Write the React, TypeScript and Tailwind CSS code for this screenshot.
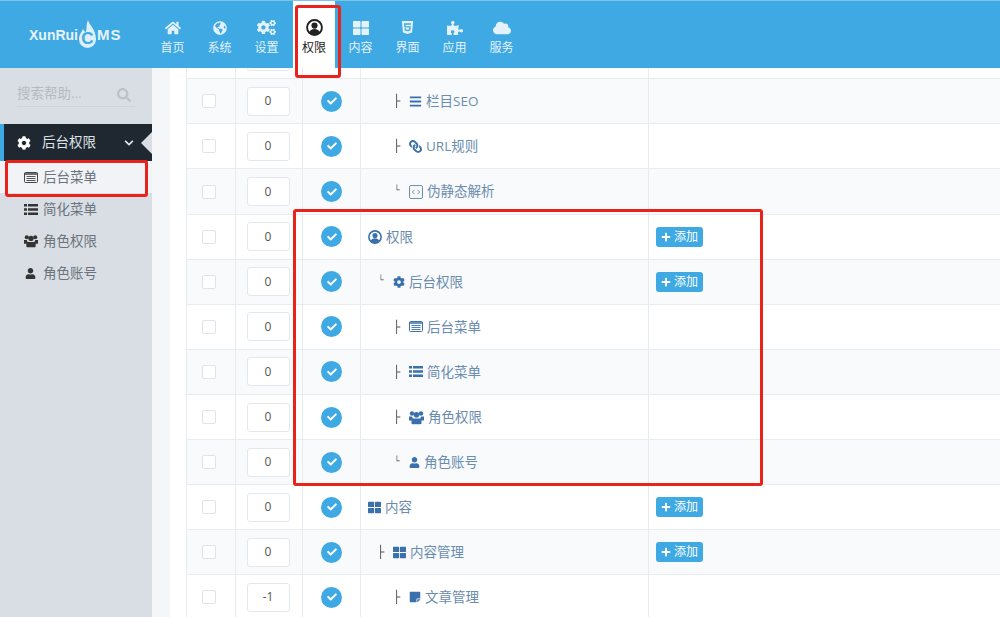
import React from "react";
import {
  FaBars,
  FaChevronDown,
  FaCheck,
  FaCloud,
  FaCog,
  FaCogs,
  FaGlobeAmericas,
  FaHome,
  FaHtml5,
  FaLink,
  FaPlus,
  FaPuzzlePiece,
  FaSearch,
  FaStickyNote,
  FaThLarge,
  FaUser,
} from "react-icons/fa";

function CodeIcon() {
  return (
    <svg width="14" height="14" viewBox="0 0 14 14" fill="none" stroke="#6f8fb0" strokeWidth="1">
      <rect x="0.5" y="0.5" width="13" height="13" rx="1.5" />
      <path d="M5.5 4.8 3.4 7l2.1 2.2M8.5 4.8 10.6 7 8.5 9.2" />
    </svg>
  );
}

function MenuIcon() {
  return (
    <svg width="14" height="11" viewBox="0 0 14 11" fill="none" stroke="currentColor">
      <rect x="0.5" y="0.5" width="13" height="10" rx="1" />
      <path d="M0 2h14" strokeWidth="1.500" />
      <path d="M2.500 4.500h9M2.500 6.500h9M2.500 8.500h9" strokeWidth="0.900" />
    </svg>
  );
}

function ListIcon() {
  return (
    <svg width="14" height="11" viewBox="0 0 14 11" fill="currentColor">
      <path d="M0 0h3v2.600H0zM4 0h10v2.600H4zM0 4.200h3v2.600H0zM4 4.200h10v2.600H4zM0 8.400h3V11H0zM4 8.400h10V11H4z" />
    </svg>
  );
}

function UsersIcon({ size = 15 }: { size?: number }) {
  return (
    <svg width={size} height={size} viewBox="0 0 15 15" fill="currentColor">
      <circle cx="3" cy="3.500" r="2.200" />
      <circle cx="12" cy="3.500" r="2.200" />
      <circle cx="7.500" cy="4.800" r="2.800" />
      <path d="M0 6.500h3l.8 2.200L2.800 10.500H0zM15 6.500h-3l-.8 2.200 1 1.800H15z" />
      <path d="M3.500 8.500h8c.8 0 1 .8 1 1.500v3c0 .8-.5 1.200-1.200 1.200H3.700c-.7 0-1.200-.4-1.200-1.200v-3c0-.7.200-1.500 1-1.500z" />
    </svg>
  );
}

function UserRingIcon({ size = 14 }: { size?: number }) {
  return (
    <svg width={size} height={size} viewBox="0 0 16 16" fill="currentColor">
      <circle cx="8" cy="6.200" r="2.900" />
      <path d="M3 13c.6-2.600 2.400-3.600 5-3.600s4.400 1 5 3.600c-1.300 1.300-3 2-5 2s-3.700-.7-5-2z" />
      <circle cx="8" cy="8" r="7" fill="none" stroke="currentColor" strokeWidth="1.800" />
    </svg>
  );
}

const navItems = [
  { label: "首页", icon: <FaHome size={16} /> },
  { label: "系统", icon: <FaGlobeAmericas size={14} /> },
  { label: "设置", icon: <FaCogs size={19} /> },
  { label: "权限", icon: <UserRingIcon size={17} />, active: true },
  { label: "内容", icon: <FaThLarge size={16} /> },
  { label: "界面", icon: <FaHtml5 size={15} /> },
  { label: "应用", icon: <FaPuzzlePiece size={16} /> },
  { label: "服务", icon: <FaCloud size={18} /> },
];

const subMenus = [
  { label: "简化菜单", icon: <ListIcon /> },
  { label: "角色权限", icon: <UsersIcon size={14} /> },
  { label: "角色账号", icon: <FaUser size={11} /> },
];

const rows: any[] = [
  { blank: true },
  { title: "栏目SEO", level: 2, mark: "├", icon: <FaBars size={13} /> },
  { title: "URL规则", level: 2, mark: "├", icon: <FaLink size={13} className="-scale-x-100" /> },
  { title: "伪静态解析", level: 2, mark: "└", icon: <CodeIcon /> },
  { title: "权限", level: 0, icon: <UserRingIcon />, add: true },
  { title: "后台权限", level: 1, mark: "└", icon: <FaCog size={12} />, add: true },
  { title: "后台菜单", level: 2, mark: "├", icon: <MenuIcon /> },
  { title: "简化菜单", level: 2, mark: "├", icon: <ListIcon /> },
  { title: "角色权限", level: 2, mark: "├", icon: <UsersIcon /> },
  { title: "角色账号", level: 2, mark: "└", icon: <FaUser size={11} /> },
  { title: "内容", level: 0, icon: <FaThLarge size={13} />, add: true },
  { title: "内容管理", level: 1, mark: "├", icon: <FaThLarge size={13} />, add: true },
  { title: "文章管理", level: 2, mark: "├", icon: <FaStickyNote size={12} />, order: "-1" },
];

function Row({ row, index }: { row: any; index: number }) {
  const indent = row.level === 2 ? "pl-8" : row.level === 1 ? "pl-4" : "pl-[5px]";
  return (
    <div
      className={`grid h-[45.1px] grid-cols-[49px_67px_58px_288px_1fr] border-b border-[#e7ecf1] ${
        index % 2 === 1 ? "bg-[#f9fafc]" : "bg-white"
      }`}
    >
      <div className="flex items-center justify-center border-r border-[#e7ecf1] pr-1">
        <span className="h-[14px] w-[14px] rounded-[2px] border border-[#dfe3ea] bg-white" />
      </div>
      <div className="flex items-center justify-center border-r border-[#e7ecf1] pr-[2px]">
        <span className="flex h-[29px] w-[43px] items-center justify-center rounded-[3px] border border-[#e3e7ee] bg-white text-[12px] text-[#555]">
          {row.blank ? "" : row.order ?? "0"}
        </span>
      </div>
      <div className="flex items-center justify-center border-r border-[#e7ecf1]">
        {!row.blank && (
          <span className="flex h-[21px] w-[21px] items-center justify-center rounded-full bg-[#3ea9e2] text-white">
            <FaCheck size={10} />
          </span>
        )}
      </div>
      <div className={`flex items-center gap-1 border-r border-[#e7ecf1] ${indent}`}>
        {row.mark && (
          <span
            className={`w-[10px] shrink-0 font-['DejaVu_Sans'] text-[12px] font-bold text-[#555] [will-change:transform] ${
              row.mark === "└" ? "-mt-[3px] scale-75" : ""
            }`}
          >
            {row.mark}
          </span>
        )}
        {row.icon && <span className="ml-[2px] flex items-center text-[#3a71ad]">{row.icon}</span>}
        <span className="text-[13.5px] text-[#6a8cae]">{row.title}</span>
      </div>
      <div className="flex items-center pl-[7px]">
        {row.add && (
          <span className="flex h-[20px] w-[47px] items-center justify-center gap-[3px] rounded-[3px] bg-[#3ea9e2] text-[12px] text-white">
            <FaPlus size={10} />
            添加
          </span>
        )}
      </div>
    </div>
  );
}

export default function App() {
  return (
    <div
      className="relative h-[617px] w-[1000px] overflow-hidden bg-white"
      style={{ fontFamily: '"Open Sans", "Noto Sans CJK SC", sans-serif' }}
    >
      <header className="relative z-10 flex h-[68px] border-t border-[#7cc4ea] bg-[#3ea9e2]">
        <div className="flex w-[149px] shrink-0 items-center pl-[29px] pt-[2px] font-['Liberation_Sans'] text-[14px] font-bold text-[#e6f3fb]">
          <span>XunRui</span>
          <span className="relative mx-[1px] -mt-[3px] block h-[28px] w-[17px] shrink-0">
            <svg width="17" height="28" viewBox="0 0 17 28" className="block">
              <path
                d="M9 0c1 5 8 9 8 19.500a8.500 8.500 0 1 1-17 0C0 14 3 12 4 9c1 2 2 3 3 3C8 8 7 4 9 0z"
                fill="#dceffa"
              />
            </svg>
            <span className="absolute inset-x-0 top-[9px] text-center text-[17px] leading-[20px] text-[#3ea9e2]">C</span>
          </span>
          <span className="text-[15px] tracking-[1px]">MS</span>
        </div>
        <nav className="flex">
          {navItems.map((item) => (
            <div
              key={item.label}
              className={`flex h-[67px] flex-col items-center pt-[18px] ${
                item.active ? "ml-[3px] mr-[2px] w-[42px] bg-white text-[#222]" : "w-[47px] text-[#e4f2fb]"
              }`}
            >
              <span className="flex h-[17px] items-center">{item.icon}</span>
              <span className="mt-[3px] text-[12px] leading-[18px]">{item.label}</span>
            </div>
          ))}
        </nav>
      </header>

      <div className="flex h-[549px]">
        <aside className="w-[152px] shrink-0 bg-[#d9dee4]">
          <div className="mx-[17px] mt-[12px] flex h-[27px] items-center justify-between border-b border-[#cfd4da] pr-[2px]">
            <span className="text-[13.5px] text-[#b4bac2]">搜索帮助...</span>
            <FaSearch size={14} className="mr-[2px] mt-[3px] text-[#bcc2c9]" />
          </div>
          <div className="relative mt-[17px] flex h-[37px] items-center border-l-4 border-[#3ea9e2] bg-[#1f2830] pl-[13px] text-[13.5px] text-[#dfe3e8]">
            <FaCog size={14} className="mr-[11px] text-white" />
            后台权限
            <FaChevronDown size={10} className="absolute left-[120px] text-[#e4e8ec]" />
            <span className="absolute right-0 h-0 w-0 border-y-[11px] border-r-[11px] border-y-transparent border-r-[#d9dee4]" />
          </div>
          <div className="flex h-[32px] items-center bg-[#f1f3f6] pl-[24px] text-[13.5px] text-[#6b747d]">
            <span className="mr-[5px] text-[#444]">
              <MenuIcon />
            </span>
            后台菜单
          </div>
          {subMenus.map((m) => (
            <div key={m.label} className="flex h-[32px] items-center text-[13.5px] text-[#6b747d]">
              <span className="flex w-[38px] justify-center pl-[23px] text-[#333]">
                <span className="flex w-[14px] shrink-0 justify-center">{m.icon}</span>
              </span>
              <span className="ml-[5px]">{m.label}</span>
            </div>
          ))}
        </aside>
        <main className="flex-1 overflow-hidden bg-[#f5f6f8] pl-[18px]">
          <div className="h-full overflow-hidden bg-white pl-4">
            <div className="-mt-[33.8px] border-l border-[#e7ecf1]">
              {rows.map((row, i) => (
                <Row key={i} row={row} index={i} />
              ))}
            </div>
          </div>
        </main>
      </div>

      <div className="pointer-events-none absolute left-[295px] top-[5px] z-20 h-[73px] w-[46px] rounded-[3px] border-[3px] border-[#e8231b]" />
      <div className="pointer-events-none absolute left-[5px] top-[160px] z-20 h-[37px] w-[143px] rounded-[3px] border-[3px] border-[#e8231b]" />
      <div className="pointer-events-none absolute left-[293px] top-[209px] z-20 h-[277px] w-[470px] rounded-[3px] border-[3px] border-[#e8231b]" />
    </div>
  );
}
